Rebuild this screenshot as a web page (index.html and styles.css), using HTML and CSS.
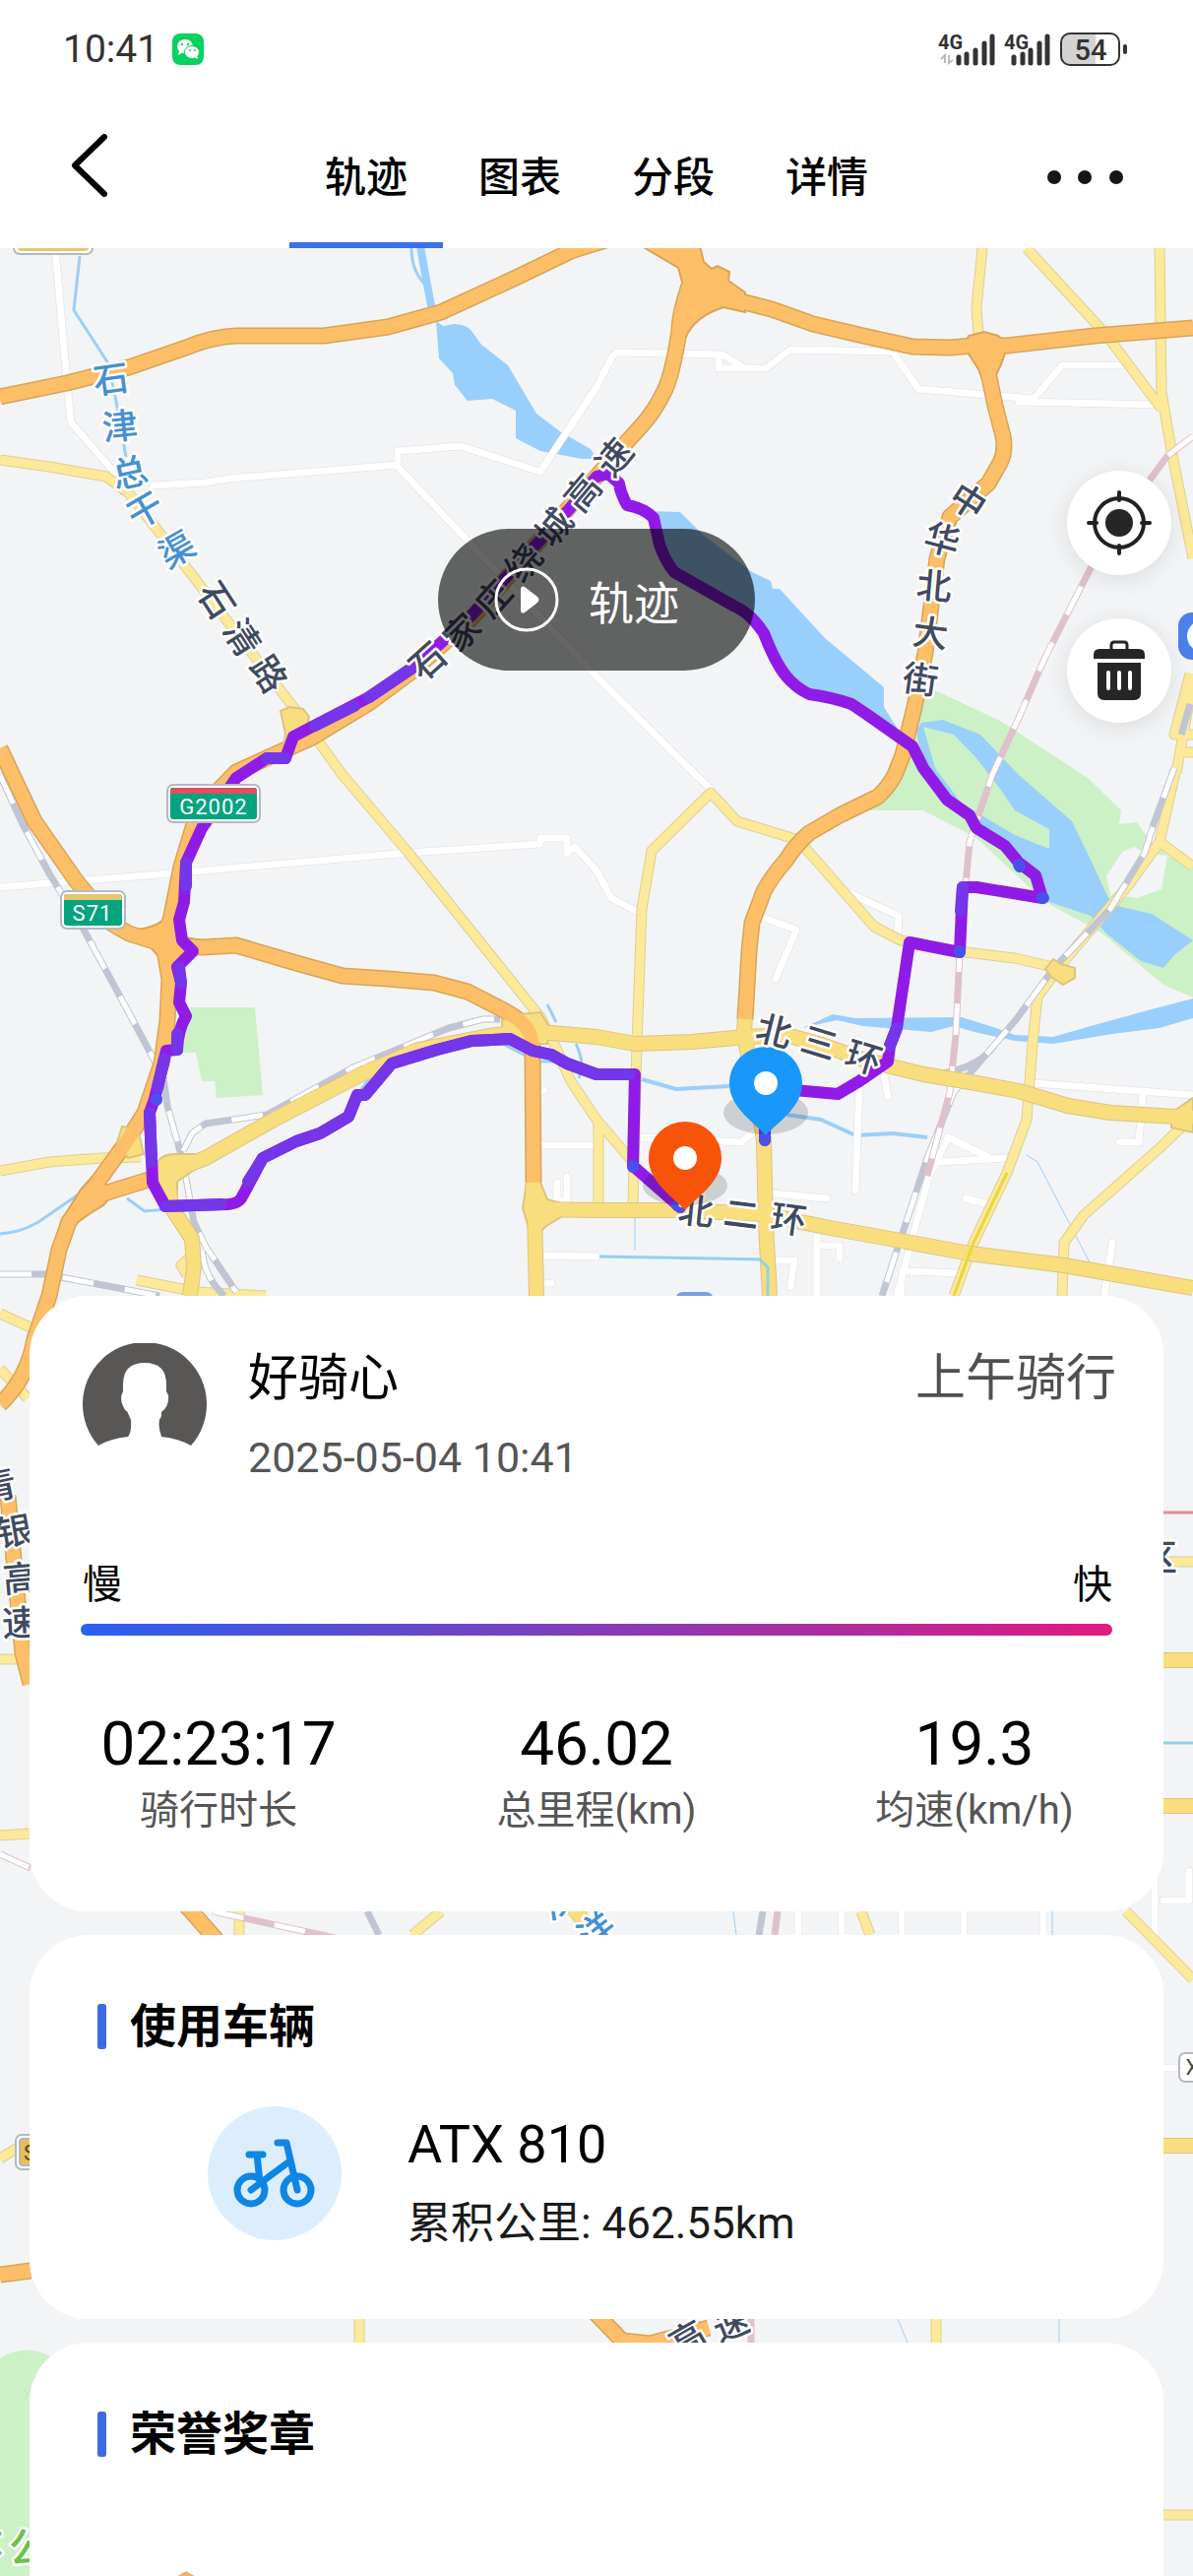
FILE: index.html
```html
<!DOCTYPE html>
<html lang="zh-CN">
<head>
    <meta charset="UTF-8">
    <meta name="viewport" content="width=device-width, initial-scale=1.0">
    <title>骑行轨迹</title>
    <link rel="stylesheet" href="styles.css">
</head>
<body>
    <header class="header">
        <div class="status-bar">
            <div class="status-left">
                <span class="clock">10:41</span>
                <svg class="wechat" viewBox="0 0 32 32" width="32" height="32" aria-hidden="true">
                    <rect width="32" height="32" rx="8" fill="#07d160"/>
                    <ellipse cx="13" cy="13" rx="8" ry="7" fill="#fff"/>
                    <path d="M7 17l-1 5 5-3z" fill="#fff"/>
                    <ellipse cx="20" cy="19" rx="7.500" ry="6.500" fill="#fff" stroke="#07d160"/>
                    <path d="M22 24l4 2-1-4z" fill="#fff"/>
                    <g fill="#07d160"><circle cx="10" cy="11" r="1.200"/><circle cx="16" cy="11" r="1.200"/><circle cx="18" cy="17" r="1"/><circle cx="23" cy="17" r="1"/></g>
                </svg>
            </div>
            <svg class="signals" viewBox="952 30 196 38" width="196" height="38" aria-label="4G 4G 54%">
                <g fill="#333" font-weight="700" font-size="20">
                    <text x="953" y="49">4G</text>
                    <text x="1020" y="49">4G</text>
                </g>
                <path d="M960 63v-8l-4 4M964 55v8l4-3" fill="none" stroke="#bbb" stroke-width="2"/>
                <path d="M974 57v6M982 54v9M991 50v13M1000 43v20M1008 36v27M1030 57v6M1039 54v9M1047 50v13M1056 43v20M1064 36v27" stroke="#333" stroke-width="5" stroke-linecap="round"/>
                <path d="M1088 33h25v32h-25q-10 0-10-10v-12q0-10 10-10z" fill="#d3d3d3"/>
                <rect x="1078" y="33" width="59" height="32" rx="9" fill="none" stroke="#333" stroke-width="2"/>
                <path d="M1143 46v6" stroke="#333" stroke-width="4" stroke-linecap="round"/>
                <text x="1108" y="60" text-anchor="middle" fill="#333" font-size="29" font-weight="500">54</text>
            </svg>
        </div>
        <nav class="nav">
            <button class="icon-button back" type="button" aria-label="返回">
                <svg viewBox="0 0 40 64" width="40" height="64"><path d="M36 3L6 32l30 29" fill="none" stroke="#000" stroke-width="6" stroke-linecap="round" stroke-linejoin="round"/></svg>
            </button>
            <div class="tabs">
                <a class="tab active" href="#track">轨迹</a>
                <a class="tab" href="#chart">图表</a>
                <a class="tab" href="#split">分段</a>
                <a class="tab" href="#detail">详情</a>
            </div>
            <button class="icon-button more" type="button" aria-label="更多">
                <svg viewBox="0 0 80 16" width="80" height="16" fill="#161616"><circle cx="9" cy="8" r="7"/><circle cx="40" cy="8" r="7"/><circle cx="72" cy="8" r="7"/></svg>
            </button>
        </nav>
    </header>

    <main class="screen">
        <svg class="map" viewBox="0 252 1212 2364" preserveAspectRatio="xMidYMin slice" role="img" aria-label="地图">
            <defs>
                <g id="white-roads">
                    <path d="M56 252L68 388L72 429L120 484M155 493L209 490L232 486L404 472V458L468 453L549 479L606 393L622 362L627 358L734 360L757 374H778L803 355L907 357L933 395L1016 402L1050 405L1079 371H1143M730 360V374H757M1035 408L1180 411"/>
                    <path d="M404 474L606 687L710 790L722 801M0 901L174 887L415 866L549 857V851H576V866L584 860L606 884L621 912L648 926"/>
                    <path d="M776 932L809 944L788 994M863 907L913 930L912 951M873 1101L869 1209M898 1091L902 1114M784 1212L840 1217M649 1155L753 1160L764 1151M1050 1100L1212 1112M1161 1112L1157 1160H1137M954 1180L1023 1176M963 1155L1004 1175M944 1194L963 1155M911 1316L944 1194M830 1255V1316M835 1265H853V1278M923 1291L973 1293M917 1290L915 1316M1130 1262L1122 1316M981 1217L1004 1223M786 1280H807L803 1307"/>
                    <path d="M549 1163H603M553 1275L606 1276M549 1108L553 1107M552 1303H560M566 1201V1220H576V1195M549 1066L572 1074M811 1941V1965M855 1941V1965M916 1941V1965M979 1941V1965M1060 1941V1965M1173 1900V1965M1182 2100H1212M1182 1930H1208V1900"/>
                </g>
                <g id="yellow-roads">
                    <path d="M0 467L50 474L108 484L131 501L166 546L232 632L301 722L348 787L415 866L549 1033L564 1062L580 1098L606 1137L643 1180M608 1137V1225"/>
                    <path d="M0 1189L50 1180L104 1176L143 1175M643 1223L647 1060L652 923L662 864L722 805L749 834L811 853L853 901L888 941L915 955L973 966L1031 973L1070 982"/>
                    <path d="M998 252L992 312L994 340M1043 252L1124 340L1180 415M1178 252L1180 398L1190 457L1212 567M1209 684L1193 746H1212M1195 780L1178 855L1147 898L1081 976L1054 1012L1049 1059L1043 1137L1023 1191L989 1262L969 1316M1178 855L1212 880M1201 1144L1178 1166L1101 1234L1081 1262L1079 1316"/>
                    <path d="M1212 690L1195 785M1198 764H1212M139 1300L200 1312L270 1316M190 1295L184 1285L195 1275M0 1334L31 1348M0 1390L28 1420M0 1685H31M0 1864L31 1862M1182 1586H1212M243 1941V1965M448 1941L419 1965M875 1941L884 1965M1144 1941L1212 2010M0 2192L20 2180M365 2355V2379M951 2355V2379M1182 2554H1212"/>
                </g>
                <g id="gold-roads">
                    <path d="M757 1030L756 1051L770 1120L776 1158L778 1244L782 1316M541 1201L543 1228L545 1316M541 1228L606 1229H691L776 1233L838 1246L915 1260L985 1273L1081 1285L1212 1308"/>
                    <path d="M170 1191L209 1176L278 1137L367 1091L425 1066L502 1051L549 1048L606 1053L645 1060L703 1058L757 1053L799 1051L838 1062L877 1076L938 1091L992 1100L1035 1108L1085 1123L1128 1130L1212 1135M170 1191L174 1226L195 1258L197 1287L193 1316"/>
                    <path d="M1182 1686H1212M1182 1834H1212M1182 2179H1212M580 1935L605 1965"/>
                </g>
                <g id="orange-roads">
                    <path d="M0 403L68 389L131 373L189 353Q215 342 240 341L329 341L394 332L448 317L522 283L580 255L660 230M700 270L737 302L784 314L826 329L877 341L927 352L965 353L1000 350L1023 351L1112 341L1212 333"/>
                    <path d="M700 290Q690 320 690 336Q684 376 676 395Q665 418 652 432L633 453L606 484L541 557L479 628L421 680L375 714L317 749L286 763L240 784L205 820L197 837L184 880L174 930L166 959L172 994L170 1037L164 1080L147 1130L124 1166L93 1209L70 1241L60 1269L50 1316L35 1360Q28 1400 0 1426"/>
                    <path d="M998 352L1006 388L1011 412L1019 443Q1022 458 1016 470L1004 491L965 525L952 567L946 615L940 663L929 718L917 767L909 787Q902 800 892 809L853 828L822 846Q808 858 799 873Q784 890 776 905L764 937L761 966L757 1035"/>
                    <path d="M0 760L35 834L77 894L112 937L131 948L166 959L205 962L240 960L301 978L348 991L394 994L441 998L475 1007L510 1025Q530 1036 535 1044Q541 1052 541 1066L542 1201M93 1216L151 1198"/>
                    <path d="M8 1519L23 1679L31 1710M0 2310L31 2306M189 1935L220 1970M604 2348L632 2377L660 2380L720 2364"/>
                </g>
            </defs>

            <!-- parks and water -->
            <g fill="#ccf1c6">
                <path d="M193 1023H259L267 1112L220 1115L218 1098H205L199 1069H185z"/>
                <path d="M950 701L1016 732L1105 790L1139 823L1137 837L1155 835L1166 851L1186 869L1212 880V1013L1182 1000L1120 948L1095 934L1062 916L992 851L938 823H880L915 787L929 715z"/>
                <path d="M0 2395Q27 2378 55 2395V2616H0z"/>
            </g>
            <path d="M1124 890L1140 865L1152 860L1163 866L1186 869L1180 903L1155 912L1140 910L1130 918z" fill="#f3f4f6"/>
            <g fill="#99cffc">
                <path d="M443 326L450 331L462 329Q475 330 479 336L489 350L516 371L545 420L570 439L600 456L606 466H591L549 458L524 445V417L500 405L475 407L462 391L460 379L446 364z"/>
                <path d="M656 519L691 520L714 543L764 581L783 590L785 598L792 598L838 648L898 698V718L911 739L917 760L877 722L826 705L799 684L764 629L683 577L668 532z"/>
                <path d="M931 742L936 734L958 731L996 746L1035 787L1089 834L1108 873L1126 912L1139 921L1170 928L1212 955L1194 969L1182 983L1159 976L1124 948L1108 930L1066 916L1030 870L985 828L938 780z"/>
                <path d="M815 1044L846 1030L869 1034L977 1033L1012 1044L1031 1051L1070 1053L1108 1042L1166 1026L1212 1014V1034L1178 1044L1130 1050L1070 1060L1031 1057L990 1048L969 1042L946 1048L877 1042L850 1036z"/>
            </g>
            <path d="M938 738L969 746L992 770L1016 801L1031 823L1066 842V862L1031 848L977 816L950 780z" fill="#ccf1c6"/>
            <g class="streams">
                <path d="M418 252Q418 276 433 290" stroke-width="3"/>
                <path d="M427 250L433 284L441 326" stroke-width="8"/>
                <path d="M81 260L75 315L110 369L118 408L128 464M0 1253Q20 1252 39 1241L81 1212M129 1217L147 1230L170 1228M363 1112L380 1088L405 1074M505 1057L545 1078L572 1078M556 1020L565 1038M585 1060Q595 1080 588 1095" stroke-width="3"/>
                <path d="M652 1096L687 1106L741 1103M799 1132L834 1137L869 1153L907 1151L942 1155M838 1062Q860 1078 890 1066" stroke-width="4"/>
                <path d="M1043 1173L1054 1180L1108 1284M645 1237V1270M745 1941L748 1965M1069 1941V1965M912 2355L922 2379M1076 2355V2379" stroke-width="1"/>
            </g>

            <!-- roads, casing first -->
            <use href="#white-roads" class="road white-casing"/>
            <use href="#white-roads" class="road white"/>
            <use href="#yellow-roads" class="road yellow-casing"/>
            <use href="#yellow-roads" class="road yellow"/>
            <g class="rail">
                <path class="rail-grey" d="M0 787L23 837L50 887L85 944L128 1023L166 1094L170 1123L186 1180L197 1241L209 1266L240 1312M186 1169L195 1151L209 1141L271 1132L359 1084L456 1044L491 1035H508M0 1294H46L162 1316M205 1270Q208 1298 228 1316M1193 780L1172 837L1163 866L1128 923L1070 984L1031 1037L969 1109L942 1176L896 1316M1010 1062Q990 1090 935 1092M373 1941L385 1965M775 1941L771 1965M1209 715L1200 746"/>
                <path class="rail-gap" d="M0 787L23 837L50 887L85 944L128 1023L166 1094L170 1123L186 1180L197 1241L209 1266L240 1312M186 1169L195 1151L209 1141L271 1132L359 1084L456 1044L491 1035H508M0 1294H46L162 1316M205 1270Q208 1298 228 1316M1193 780L1172 837L1163 866L1128 923L1070 984L1031 1037L969 1109L942 1176L896 1316"/>
                <path class="rail-pink" d="M1212 443L1186 463L1155 505L1108 577L1062 667L1035 729L1008 787L985 855L975 966L971 1051L965 1109L942 1194M0 1883L31 1897M216 1941L340 1968M790 1941L787 1965M763 2355V2379"/>
                <path class="rail-gap" d="M1212 443L1186 463L1155 505L1108 577L1062 667L1035 729L1008 787L985 855L975 966L971 1051L965 1109L942 1194M0 1883L31 1897M216 1941L340 1968"/>
            </g>
            <use href="#gold-roads" class="road gold-casing"/>
            <use href="#orange-roads" class="road orange-casing"/>
            <g fill="#f9de7e" stroke="#dcc480" stroke-width="2">
                <path d="M160 1195V1180Q165 1172 178 1172H200L215 1176L180 1200L180 1225H165z"/>
                <path d="M535 1201H549L556 1218L570 1222V1236L555 1245L550 1250H538L531 1227z"/>
                <path d="M285 722L294 718L308 720L314 728L310 742L318 755L286 768L290 745z"/>
                <path d="M1062 984L1070 974L1078 979L1092 983V993L1080 1000L1068 992z"/>
                <path d="M510 1036L528 1030L549 1028L560 1046L556 1060H510z"/>
                <path d="M119 1160L124 1144L140 1146L146 1172L130 1176z"/>
                <path d="M1190 1130L1212 1115V1150L1190 1145z"/>
            </g>
            <g fill="#fcbf68" stroke="#d9a456" stroke-width="2">
                <path d="M652 250L689 272L695 294L690 306L688 342L697 342Q705 322 735 312L757 317L757 297L740 285L741 276L729 270L723 273L715 266L711 250z"/>
                <path d="M980 353L984 341L1000 337L1014 341L1024 350L1017 370L1010 385H998L994 375z"/>
                <path d="M140 944Q164 940 169 930L184 935L188 952L205 955V968L184 970L178 992H166L162 972L148 957z"/>
                <path d="M82 1208L100 1188L108 1204L122 1204L105 1224L92 1232L72 1246L62 1240z"/>
            </g>
            <use href="#gold-roads" class="road gold"/>
            <use href="#orange-roads" class="road orange"/>
            <path d="M1023 1191L989 1262L969 1316" fill="none" stroke="#e9d53f" stroke-width="3"/>
            <path d="M609 1276L772 1279L780 1287V1316M1182 1770H1212" fill="none" stroke="#8fd3ea" stroke-width="3"/>
            <path d="M1182 1536H1212" stroke="#e68a94" stroke-width="3"/>

            <!-- recorded ride -->
            <g class="route">
                <path d="M777 1158V1120L807 1107L851 1111L873 1098L902 1078L904 1062L911 1044L924 957L975 967L978 901H992L1059 912L1052 889L1035 876L1021 859L992 841L985 828L962 812L938 780L927 758L880 725L865 715Q845 708 822 705Q808 698 799 687Q788 674 776 643Q762 622 745 615L685 581Q676 570 670 553L664 526Q655 516 637 513Q630 500 629 491L618 481L606 484L580 515L541 557L479 625L421 677L375 708L298 748L290 770H271L240 790L205 841L189 876L187 916L182 934L185 955L196 966L180 982L184 998L182 1018L189 1032Q181 1045 180 1066L169 1067L157 1116L152 1130L155 1201L168 1225L232 1223Q242 1222 245 1217L267 1176L301 1159L325 1151L354 1134L363 1112H371L398 1080L444 1066L479 1057L518 1055L541 1067L560 1071L576 1080L606 1091H645L643 1184L691 1226"/>
                <path class="slower" d="M978 901L976 925M904 1062L911 1044M416 680L375 708M360 717L320 737M290 770H271M189 876V900M182 982L184 998M180 1050V1066M167 1075L160 1105M152 1130L154 1180M168 1225L225 1223M252 1200L267 1176L301 1159L325 1151L354 1134L363 1112H371L398 1080L444 1066L479 1057L518 1055L541 1067L560 1071L576 1080L606 1091H640"/>
                <path class="slowest" d="M777 1158V1154M1035 878L1036 880M1059 912H1060M975 966V967M159 1116V1117M643 1184V1185M688 1224L691 1226"/>
            </g>

            <g class="pin">
                <ellipse cx="778" cy="1130" rx="43" ry="22" fill="#000" opacity=".15"/>
                <path d="M778 1153C764 1138 741 1124 741 1100a37 37 0 0 1 74 0C815 1124 792 1138 778 1153z" fill="#1a97fb"/>
                <circle cx="778" cy="1100" r="12" fill="#fff"/>
            </g>

            <g class="labels water-labels">
                <text transform="translate(113 386) rotate(-8)">石</text>
                <text transform="translate(122 434) rotate(-6)">津</text>
                <text transform="translate(132 481) rotate(-12)">总</text>
                <text transform="translate(148 519) rotate(-30)">干</text>
                <text transform="translate(180 559) rotate(-30)">渠</text>
                <text transform="translate(566 1931) rotate(-38)">沙</text>
                <text transform="translate(606 1961) rotate(-38)">洋</text>
            </g>
            <g class="labels">
                <text transform="translate(219 610) rotate(57)">石</text>
                <text transform="translate(245 648) rotate(57)">清</text>
                <text transform="translate(272 685) rotate(57)">路</text>
                <text transform="translate(435 672) rotate(-42)">石</text>
                <text transform="translate(470 643) rotate(-45)">家</text>
                <text transform="translate(502 608) rotate(-48)">庄</text>
                <text transform="translate(533 572) rotate(-50)">绕</text>
                <text transform="translate(564 536) rotate(-50)">城</text>
                <text transform="translate(593 501) rotate(-50)">高</text>
                <text transform="translate(625 465) rotate(-50)">速</text>
                <text transform="translate(983 510) rotate(33)">中</text>
                <text transform="translate(957 549) rotate(15)">华</text>
                <text transform="translate(949 596) rotate(5)">北</text>
                <text transform="translate(945 644) rotate(7)">大</text>
                <text transform="translate(935 691) rotate(8)">街</text>
                <text transform="translate(786 1048) rotate(14)">北</text>
                <text transform="translate(832 1060) rotate(17)">三</text>
                <text transform="translate(877 1075) rotate(17)">环</text>
                <text transform="translate(707 1231) rotate(6)">北</text>
                <text transform="translate(753 1234) rotate(7)">二</text>
                <text transform="translate(801 1239) rotate(8)">环</text>
                <text transform="translate(-1 1510) rotate(-12)">青</text>
                <text transform="translate(15 1556) rotate(-10)">银</text>
                <text transform="translate(21 1604) rotate(-5)">高</text>
                <text transform="translate(20 1649) rotate(-3)">速</text>
                <text transform="translate(1178 1583)">区</text>
                <text transform="translate(699 2376) rotate(-30)">高</text>
                <text transform="translate(743 2361) rotate(-22)">速</text>
            </g>
            <g class="labels park-labels">
                <text transform="translate(-18 2584)">体</text>
                <text transform="translate(30 2588)">公</text>
            </g>

            <g class="pin">
                <ellipse cx="696" cy="1204" rx="43" ry="20" fill="#000" opacity=".15"/>
                <path d="M696 1229C682 1214 659 1200 659 1176a37 37 0 0 1 74 0C733 1200 710 1214 696 1229z" fill="#f75409"/>
                <circle cx="696" cy="1176" r="12" fill="#fff"/>
            </g>

            <!-- road shields -->
            <g class="shields">
                <rect x="14" y="220" width="80" height="38" rx="6"/>
                <rect x="18" y="220" width="72" height="35" rx="4" class="plate-gold"/>
                <rect x="170" y="797" width="94" height="38" rx="6"/>
                <rect x="173" y="800" width="88" height="32" rx="3" class="plate-green"/>
                <path d="M173 806v-3q0-3 3-3h82q3 0 3 3v3z" fill="#df515d"/>
                <text x="217" y="827">G2002</text>
                <rect x="62" y="905" width="65" height="38" rx="6"/>
                <rect x="65" y="908" width="59" height="32" rx="3" class="plate-green"/>
                <path d="M65 914v-3q0-3 3-3h53q3 0 3 3v3z" fill="#e3c771"/>
                <text x="94" y="935">S71</text>
                <rect x="16" y="2168" width="60" height="35" rx="6"/>
                <rect x="20" y="2172" width="52" height="27" rx="3" fill="#ebbd52"/>
                <text x="31" y="2194" class="dark">S</text>
                <rect x="1198" y="2085" width="60" height="29" rx="6"/>
                <text x="1212" y="2107" class="dark">X</text>
            </g>
            <rect x="1197" y="622" width="60" height="48" rx="14" fill="#4a80ea"/>
            <circle cx="1222" cy="646" r="16" fill="#fff"/>
            <rect x="686" y="1312" width="39" height="30" rx="8" fill="#7a9fe5"/>
        </svg>

        <div class="sheet">
            <section class="map-controls" id="track">
                <button class="play-button" type="button">
                    <svg viewBox="0 0 66 66" width="66" height="66" aria-hidden="true"><circle cx="33" cy="33" r="31" fill="none" stroke="#fff" stroke-width="3"/><path d="M27 23v20q0 5 4 3l13-10q3-3 0-6L31 20q-4-2-4 3z" fill="#fff"/></svg>
                    轨迹
                </button>
                <div class="map-tools">
                    <button class="round-button" type="button" aria-label="定位">
                        <svg viewBox="0 0 66 66" width="66" height="66"><circle cx="33" cy="33" r="25" fill="none" stroke="#222" stroke-width="4"/><circle cx="33" cy="33" r="14" fill="#262626"/><path d="M33 2v8M33 56v8M2 33h8M56 33h8" stroke="#222" stroke-width="4" stroke-linecap="round"/></svg>
                    </button>
                    <button class="round-button" type="button" aria-label="删除">
                        <svg viewBox="0 0 66 66" width="66" height="66" fill="#262626"><path d="M25 11V7q0-3 3-3h10q3 0 3 3v4" fill="none" stroke="#262626" stroke-width="3"/><path d="M7 21v-4q0-6 6-6h40q6 0 6 6v4zM11 25h44v31q0 7-7 7H18q-7 0-7-7z"/><path d="M22 35v16M33 35v16M44 35v16" stroke="#fff" stroke-width="4" stroke-linecap="round"/></svg>
                    </button>
                </div>
            </section>

            <section class="card summary">
                <div class="rider">
                    <svg class="avatar" viewBox="0 0 126 126" width="126" height="126" role="img" aria-label="头像">
                        <path d="M16 104A63 63 0 1 1 110 104Q98 97 80 95Q75 80 80 74V70Q88 64 87 53L85 49V42Q85 20 63 20T41 42V49Q36 58 44 69H45L49 78Q50 90 46 95Q28 97 16 104z" fill="#595755"/>
                    </svg>
                    <div class="rider-info">
                        <h1 class="rider-name">好骑心</h1>
                        <time class="ride-date" datetime="2025-05-04T10:41">2025-05-04 10:41</time>
                    </div>
                    <p class="ride-title">上午骑行</p>
                </div>
                <div class="speed-legend">
                    <span>慢</span>
                    <span>快</span>
                </div>
                <div class="speed-bar"></div>
                <dl class="stats">
                    <div class="stat"><dd>02:23:17</dd><dt>骑行时长</dt></div>
                    <div class="stat"><dd>46.02</dd><dt>总里程(km)</dt></div>
                    <div class="stat"><dd>19.3</dd><dt>均速(km/h)</dt></div>
                </dl>
            </section>

            <section class="card vehicle">
                <h2 class="card-title">使用车辆</h2>
                <div class="bike">
                    <div class="bike-icon">
                        <svg viewBox="0 0 136 136" width="136" height="136" fill="none" stroke="#0d86e5" stroke-width="7" stroke-linecap="round" stroke-linejoin="round" aria-hidden="true">
                            <circle cx="44" cy="85" r="14"/><circle cx="91" cy="85" r="14"/>
                            <path d="M44 85L83 56M91 85L80 37H71M42 49H56M50 49L53 77"/>
                        </svg>
                    </div>
                    <div class="bike-info">
                        <h3>ATX 810</h3>
                        <p>累积公里: 462.55km</p>
                    </div>
                </div>
            </section>

            <section class="card honor">
                <h2 class="card-title">荣誉奖章</h2>
                <svg class="medal" viewBox="0 0 150 160" width="150" height="160" aria-hidden="true"><path d="M75 0L145 40V120L75 160L5 120V40z" fill="#eab563"/><path d="M75 8L138 44V116L75 152L12 116V44z" fill="#f9d58f"/></svg>
            </section>
        </div>
    </main>
</body>
</html>
```

FILE: styles.css
```css
* {
    box-sizing: border-box;
}
body {
    display: flex;
    flex-direction: column;
    height: 100vh;
    margin: 0;
    overflow: hidden;
    font-family: Roboto, "Noto Sans CJK SC", sans-serif;
    color: #000;
    background-color: #f3f4f6;
}
h1, h2, h3, p, dl, dd {
    margin: 0;
    font-weight: 400;
}
button {
    padding: 0;
    border: 0;
    background: none;
    font-family: inherit;
    cursor: pointer;
}
svg {
    display: block;
}

/* header */
.header {
    flex: none;
    background-color: #fff;
}
.status-bar {
    display: flex;
    align-items: center;
    justify-content: space-between;
    height: 100px;
    padding: 0 64px;
}
.status-left {
    display: flex;
    align-items: center;
    gap: 14px;
}
.clock {
    font-size: 39px;
    color: #333;
}
.nav {
    display: grid;
    grid-template-columns: 1fr auto 1fr;
    height: 152px;
    padding: 0 70px;
}
.icon-button {
    height: 136px;
}
.back {
    justify-self: start;
}
.more {
    justify-self: end;
    height: 160px;
}
.tabs {
    display: flex;
}
.tab {
    width: 156px;
    height: 152px;
    padding-top: 8px;
    border-bottom: 6px solid transparent;
    font-size: 42px;
    font-weight: 500;
    line-height: 146px;
    text-align: center;
    text-decoration: none;
    color: #000;
}
.tab.active {
    border-color: #3a70ea;
}

/* map layer and the sheet share one grid cell */
.screen {
    display: grid;
    flex: 1;
    min-height: 0;
    overflow: hidden;
}
.map, .sheet {
    grid-area: 1 / 1;
    min-height: 0;
}
.map {
    width: 100%;
    height: 100%;
}
.road, .route, .streams, .rail {
    fill: none;
    stroke-linejoin: round;
}
.streams {
    stroke: #99cffc;
}
.white-casing {
    stroke: #dcdde1;
    stroke-width: 8px;
    stroke-linecap: round;
}
.white {
    stroke: #fff;
    stroke-width: 7px;
    stroke-linecap: round;
}
.yellow-casing {
    stroke: #ddcf95;
    stroke-width: 11px;
}
.yellow {
    stroke: #fce99a;
    stroke-width: 9px;
}
.gold-casing {
    stroke: #dcc480;
    stroke-width: 16px;
}
.gold {
    stroke: #f9de7e;
    stroke-width: 14px;
}
.orange-casing {
    stroke: #d9a456;
    stroke-width: 17px;
}
.orange {
    stroke: #fcbf68;
    stroke-width: 14px;
}
.rail-grey {
    stroke: #c0c5d3;
    stroke-width: 7px;
}
.rail-pink {
    stroke: #dfc1cb;
    stroke-width: 7px;
}
.rail-gap {
    stroke: #fff;
    stroke-width: 5px;
    stroke-dasharray: 32px;
}
.route {
    stroke: #901be6;
    stroke-width: 12px;
    stroke-linecap: round;
}
.slower {
    stroke: #7535e9;
}
.slowest {
    stroke: #4a50ee;
}
.labels {
    fill: #404a5f;
    stroke: #fff;
    stroke-width: 5px;
    stroke-linejoin: round;
    paint-order: stroke;
    font-size: 36px;
    font-weight: 500;
    text-anchor: middle;
    dominant-baseline: central;
}
.water-labels {
    fill: #4590d3;
}
.park-labels {
    fill: #6fbf4c;
    font-size: 42px;
}
.shields {
    fill: #fff;
    stroke: #b3b9c4;
    stroke-width: 2px;
    font-size: 22px;
    letter-spacing: 1px;
    text-anchor: middle;
}
.shields text, .shields path {
    stroke: none;
}
.shields .dark {
    fill: #444;
}
.shields .plate-green {
    fill: #05a37f;
    stroke: none;
}
.shields .plate-gold {
    fill: #e3c771;
    stroke: none;
}

/* sheet */
.sheet {
    display: flex;
    flex-direction: column;
    gap: 24px;
    padding: 0 30px;
}
.map-controls {
    display: grid;
    flex: none;
    grid-template-columns: 1fr auto 1fr;
    align-items: start;
    height: 1040px;
    margin: 0 -8px;
}
.play-button {
    display: flex;
    grid-column: 2;
    align-items: center;
    justify-content: center;
    gap: 30px;
    width: 322px;
    height: 144px;
    margin-top: 285px;
    padding-right: 20px;
    border-radius: 72px;
    background-color: rgba(0, 0, 0, 0.6);
    font-size: 46px;
    color: #fff;
}
.map-tools {
    display: grid;
    justify-self: end;
    gap: 44px;
    margin-top: 226px;
}
.round-button {
    display: grid;
    place-items: center;
    width: 106px;
    height: 106px;
    border-radius: 50%;
    background-color: #fff;
    box-shadow: 0 4px 24px rgba(0, 0, 0, 0.1);
}
.card {
    flex: none;
    border-radius: 60px;
    background-color: #fff;
}
.summary {
    padding-bottom: 70px;
}
.rider {
    display: flex;
    align-items: flex-start;
    padding: 48px 48px 0 54px;
}
.rider-info {
    flex: 1;
    margin-left: 42px;
}
.rider-name, .ride-title {
    font-size: 51px;
    line-height: 72px;
}
.ride-title {
    color: #505050;
}
.ride-date {
    display: block;
    margin-top: 14px;
    font-size: 43px;
    line-height: 60px;
    color: #555;
}
.speed-legend {
    display: flex;
    justify-content: space-between;
    padding: 70px 52px 0 54px;
    font-size: 40px;
    line-height: 60px;
}
.speed-bar {
    height: 12px;
    margin: 9px 52px 0;
    border-radius: 6px;
    background: linear-gradient(90deg, #2b60ee, #8c39b2 55%, #e01b7e);
}
.stats {
    display: grid;
    grid-template-columns: repeat(3, 1fr);
    margin-top: 74px;
    text-align: center;
}
.stat {
    display: flex;
    flex-direction: column;
}
.stat dd {
    font-size: 62px;
    line-height: 72px;
}
.stat dt {
    font-size: 40px;
    line-height: 64px;
    color: #555;
}
.card-title {
    display: flex;
    align-items: center;
    gap: 24px;
    padding: 58px 69px 0;
    font-size: 47px;
    font-weight: 700;
    line-height: 70px;
}
.card-title::before {
    content: "";
    width: 9px;
    height: 46px;
    border-radius: 3px;
    background-color: #3c6ae0;
}
.vehicle {
    padding-bottom: 57px;
}
.bike {
    display: flex;
    align-items: center;
    gap: 67px;
    padding: 23px 181px 0;
}
.bike-icon {
    border-radius: 50%;
    background-color: #dceefd;
}
.bike-info {
    padding-top: 22px;
}
.bike-info h3 {
    font-size: 54px;
    line-height: 80px;
}
.bike-info p {
    font-size: 44px;
    line-height: 80px;
    color: #1a1a1a;
}
.medal {
    margin: 104px 0 0 84px;
}
```
